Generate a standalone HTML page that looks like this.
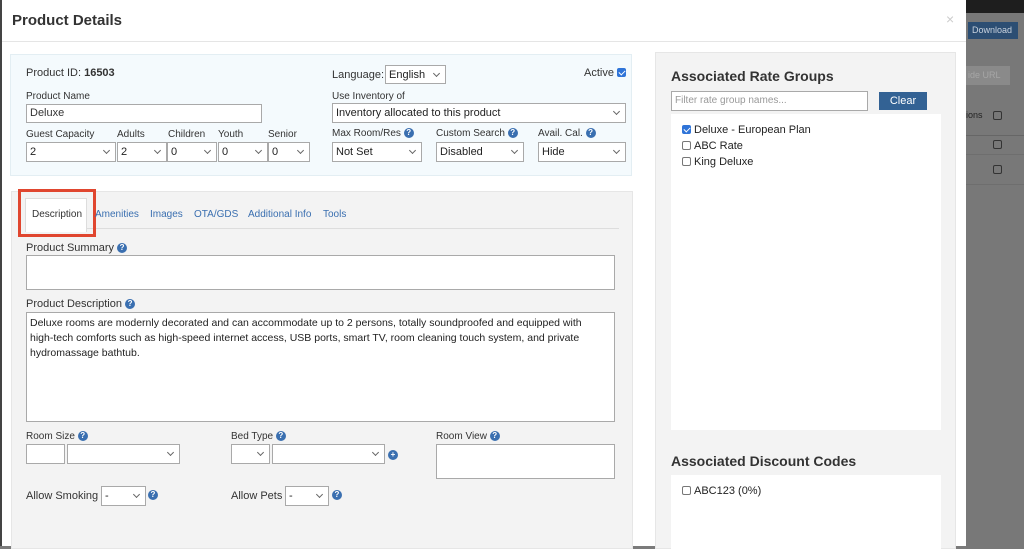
<!DOCTYPE html>
<html><head><meta charset="utf-8"><style>
*{box-sizing:border-box;margin:0;padding:0}
body{width:1024px;height:549px;overflow:hidden;background:#7b7b7b;font-family:"Liberation Sans",sans-serif;color:#333;position:relative;font-size:11px}
.a{position:absolute}
.bg{position:absolute;left:966px;top:0;width:58px;height:549px;background:#787878}
.modal{position:absolute;left:0;top:0;width:966px;height:546px;background:#fff;box-shadow:inset 2px 0 0 #444}
.sel{position:absolute;height:20px;border:1px solid #a9a9a9;background:#fff;font-size:11px;line-height:18px;padding-left:3px;color:#222}
.sel:after{content:"";position:absolute;right:6px;top:5px;width:4px;height:4px;border-right:1px solid #666;border-bottom:1px solid #666;transform:rotate(45deg)}
.inp{position:absolute;border:1px solid #a9a9a9;background:#fff}
.q{display:inline-block;width:10px;height:10px;border-radius:50%;background:#3a6fb0;color:#fff;font-size:8px;line-height:10px;text-align:center;font-weight:bold;vertical-align:1px}
.lbl{position:absolute;font-size:10px;color:#333}
.cb{display:inline-block;width:9px;height:9px;border:1px solid #777;border-radius:2px;vertical-align:-1px;margin-right:3px;background:#fff}
.cbon{background:#2f74d8;border-color:#2f74d8;position:relative}
.cbon:after{content:"";position:absolute;left:2px;top:0;width:3px;height:5px;border-right:1.5px solid #fff;border-bottom:1.5px solid #fff;transform:rotate(45deg)}
</style></head><body>
<div class="bg"></div>
<div class="a" style="left:966px;top:0;width:58px;height:13px;background:#1e1e1e"></div>
<div class="a" style="left:968px;top:22px;width:50px;height:17px;background:#2c4e73;color:#c8d2de;font-size:9px;line-height:17px;padding-left:4px">Download</div>
<div class="a" style="left:966px;top:66px;width:44px;height:19px;background:#8a8a8a;color:#a6a6a6;font-size:9px;line-height:19px;padding-left:2px">ide URL</div>
<div class="a" style="left:966px;top:110px;color:#222;font-size:9px">ions</div>
<div class="a" style="left:993px;top:111px;width:9px;height:9px;border:1px solid #333;border-radius:2px"></div>
<div class="a" style="left:966px;top:135px;width:58px;height:1px;background:#666"></div>
<div class="a" style="left:966px;top:154px;width:58px;height:1px;background:#6e6e6e"></div>
<div class="a" style="left:966px;top:184px;width:58px;height:1px;background:#6e6e6e"></div>
<div class="a" style="left:993px;top:140px;width:9px;height:9px;border:1px solid #333;border-radius:2px"></div>
<div class="a" style="left:993px;top:165px;width:9px;height:9px;border:1px solid #333;border-radius:2px"></div>
<div class="modal">
<div class="a" style="left:12px;top:12px;font-size:15px;font-weight:bold;color:#333">Product Details</div>
<div class="a" style="left:946px;top:11px;font-size:14px;color:#ccc">×</div>
<div class="a" style="left:2px;top:41px;width:964px;height:1px;background:#e5e5e5"></div>

<div class="a" style="left:10px;top:54px;width:622px;height:122px;background:#f4fafd;border:1px solid #e3eef3"></div>
<div class="a" style="left:26px;top:67px;font-size:11px">Product ID: <b>16503</b></div>
<div class="lbl" style="left:26px;top:91px">Product Name</div>
<div class="inp" style="left:26px;top:104px;width:236px;height:19px;font-size:11px;line-height:17px;padding-left:3px">Deluxe</div>
<div class="lbl" style="left:26px;top:129px">Guest Capacity</div>
<div class="lbl" style="left:117px;top:129px">Adults</div>
<div class="lbl" style="left:168px;top:129px">Children</div>
<div class="lbl" style="left:218px;top:129px">Youth</div>
<div class="lbl" style="left:268px;top:129px">Senior</div>
<div class="sel" style="left:26px;top:142px;width:90px">2</div>
<div class="sel" style="left:117px;top:142px;width:50px">2</div>
<div class="sel" style="left:167px;top:142px;width:50px">0</div>
<div class="sel" style="left:218px;top:142px;width:50px">0</div>
<div class="sel" style="left:268px;top:142px;width:42px">0</div>

<div class="a" style="left:332px;top:69px;font-size:11px">Language:</div>
<div class="sel" style="left:385px;top:65px;width:61px;height:19px">English</div>
<div class="a" style="left:584px;top:67px;font-size:11px">Active <span class="cb cbon"></span></div>
<div class="lbl" style="left:332px;top:91px">Use Inventory of</div>
<div class="sel" style="left:332px;top:103px;width:294px">Inventory allocated to this product</div>
<div class="lbl" style="left:332px;top:128px">Max Room/Res <span class="q">?</span></div>
<div class="lbl" style="left:436px;top:128px">Custom Search <span class="q">?</span></div>
<div class="lbl" style="left:538px;top:128px">Avail. Cal. <span class="q">?</span></div>
<div class="sel" style="left:332px;top:142px;width:90px">Not Set</div>
<div class="sel" style="left:436px;top:142px;width:88px">Disabled</div>
<div class="sel" style="left:538px;top:142px;width:88px">Hide</div>

<div class="a" style="left:11px;top:191px;width:622px;height:358px;background:#f3f3f3;border:1px solid #e6e6e6"></div>
<div class="a" style="left:25px;top:228px;width:594px;height:1px;background:#ddd"></div>
<div class="a" style="left:25px;top:198px;width:62px;height:34px;background:#fff;border:1px solid #ddd;border-bottom:none"></div>
<div class="a" style="left:32px;top:209px;font-size:10px;color:#333">Description</div>
<div class="a" style="left:18px;top:189px;width:78px;height:48px;border:3px solid #e0462f"></div>
<div class="a" style="left:95px;top:209px;font-size:10px;color:#3a6fb0">Amenities</div>
<div class="a" style="left:150px;top:209px;font-size:10px;color:#3a6fb0">Images</div>
<div class="a" style="left:194px;top:209px;font-size:10px;color:#3a6fb0">OTA/GDS</div>
<div class="a" style="left:248px;top:209px;font-size:10px;color:#3a6fb0">Additional Info</div>
<div class="a" style="left:323px;top:209px;font-size:10px;color:#3a6fb0">Tools</div>

<div class="a" style="left:26px;top:242px;font-size:11px">Product Summary <span class="q">?</span></div>
<div class="inp" style="left:26px;top:255px;width:589px;height:35px"></div>
<div class="a" style="left:26px;top:298px;font-size:11px">Product Description <span class="q">?</span></div>
<div class="inp" style="left:26px;top:312px;width:589px;height:110px;font-size:10.5px;line-height:15px;padding:3px 3px;color:#222">Deluxe rooms are modernly decorated and can accommodate up to 2 persons, totally soundproofed and equipped with<br>high-tech comforts such as high-speed internet access, USB ports, smart TV, room cleaning touch system, and private<br>hydromassage bathtub.</div>

<div class="a" style="left:26px;top:431px;font-size:10px">Room Size <span class="q">?</span></div>
<div class="inp" style="left:26px;top:444px;width:39px;height:20px"></div>
<div class="sel" style="left:67px;top:444px;width:113px"></div>
<div class="a" style="left:231px;top:431px;font-size:10px">Bed Type <span class="q">?</span></div>
<div class="sel" style="left:231px;top:444px;width:39px"></div>
<div class="sel" style="left:272px;top:444px;width:113px"></div>
<div class="a" style="left:388px;top:449px"><span class="q">+</span></div>
<div class="a" style="left:436px;top:431px;font-size:10px">Room View <span class="q">?</span></div>
<div class="inp" style="left:436px;top:444px;width:179px;height:35px"></div>
<div class="a" style="left:26px;top:490px;font-size:11px">Allow Smoking</div>
<div class="sel" style="left:101px;top:486px;width:45px">-</div>
<div class="a" style="left:148px;top:489px"><span class="q">?</span></div>
<div class="a" style="left:231px;top:490px;font-size:11px">Allow Pets</div>
<div class="sel" style="left:285px;top:486px;width:44px">-</div>
<div class="a" style="left:332px;top:489px"><span class="q">?</span></div>

<div class="a" style="left:655px;top:52px;width:301px;height:497px;background:#f3f3f3;border:1px solid #e6e6e6"></div>
<div class="a" style="left:671px;top:68px;font-size:14px;font-weight:bold;color:#333">Associated Rate Groups</div>
<div class="inp" style="left:671px;top:91px;width:197px;height:20px;font-size:10px;color:#999;line-height:18px;padding-left:3px">Filter rate group names...</div>
<div class="a" style="left:879px;top:92px;width:48px;height:18px;background:#336294;color:#fff;font-size:11px;line-height:18px;text-align:center">Clear</div>
<div class="a" style="left:671px;top:114px;width:270px;height:316px;background:#fff"></div>
<div class="a" style="left:682px;top:122px;font-size:11px;line-height:16px;color:#222"><span class="cb cbon"></span>Deluxe - European Plan<br><span class="cb"></span>ABC Rate<br><span class="cb"></span>King Deluxe</div>
<div class="a" style="left:671px;top:453px;font-size:14px;font-weight:bold;color:#333">Associated Discount Codes</div>
<div class="a" style="left:671px;top:475px;width:270px;height:74px;background:#fff"></div>
<div class="a" style="left:682px;top:485px;font-size:11px;color:#222"><span class="cb"></span>ABC123 (0%)</div>
</div>
</body></html>
